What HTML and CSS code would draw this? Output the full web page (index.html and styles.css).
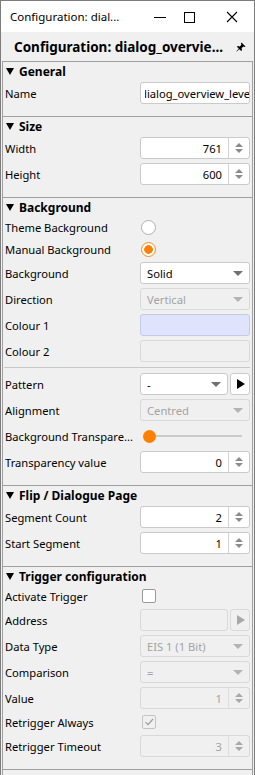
FILE: index.html
```html
<!DOCTYPE html>
<html>
<head>
<meta charset="utf-8">
<link rel="stylesheet" href="styles.css">
</head>
<body>
<div class="window">
  <div class="titlebar">
    <span class="title">Configuration: dial...</span>
    <div class="ctl ctl-min"><svg width="12" height="12" viewBox="0 0 12 12"><line x1="0" y1="6.5" x2="12" y2="6.5" stroke="#000" stroke-width="1"/></svg></div>
    <div class="ctl ctl-max"><svg width="12" height="12" viewBox="0 0 12 12"><rect x="1.5" y="1.5" width="10" height="10" fill="none" stroke="#000" stroke-width="1"/></svg></div>
    <div class="ctl ctl-close"><svg width="12" height="12" viewBox="0 0 12 12"><path d="M1 1L11 11M11 1L1 11" stroke="#000" stroke-width="1.1"/></svg></div>
  </div>
  <div class="header">
    <span class="htext">Configuration: dialog_overvie...</span>
    <svg class="pin" width="10" height="10" viewBox="0 0 10 10"><path d="M5.5 0.5L9.5 4.5L8.6 5.1L7.3 4.6L5.6 6.3L6 8.3L5.2 9.1L3.3 7.2L0.8 9.6L0.4 9.2L2.8 6.7L0.9 4.8L1.7 4L3.7 4.4L5.4 2.7L4.9 1.4Z" fill="#000"/></svg>
  </div>
  <div class="panel">
    <section class="sec">
      <div class="sec-title"><span class="tri"></span>General</div>
      <div class="row"><span class="lbl">Name</span><div class="field"><span class="val name-val">dialog_overview_level</span></div></div>
    </section>
    <section class="sec">
      <div class="sec-title"><span class="tri"></span>Size</div>
      <div class="row"><span class="lbl">Width</span><div class="field spin"><span class="val num">761</span><span class="spinbtn"><span class="up"></span><span class="dn"></span></span></div></div>
      <div class="row"><span class="lbl">Height</span><div class="field spin"><span class="val num">600</span><span class="spinbtn"><span class="up"></span><span class="dn"></span></span></div></div>
    </section>
    <section class="sec">
      <div class="sec-title"><span class="tri"></span>Background</div>
      <div class="row small"><span class="lbl">Theme Background</span><span class="radio"></span></div>
      <div class="row small"><span class="lbl">Manual Background</span><span class="radio on"></span></div>
      <div class="row"><span class="lbl">Background</span><div class="field combo"><span class="val">Solid</span><span class="arrow"></span></div></div>
      <div class="row"><span class="lbl">Direction</span><div class="field combo dis"><span class="val">Vertical</span><span class="arrow"></span></div></div>
      <div class="row"><span class="lbl">Colour 1</span><div class="field colour"></div></div>
      <div class="row"><span class="lbl">Colour 2</span><div class="field dis"></div></div>
      <div class="sep"></div>
      <div class="row"><span class="lbl">Pattern</span><div class="field combo short"><span class="val">-</span><span class="arrow"></span></div><div class="btn"><span class="play"></span></div></div>
      <div class="row"><span class="lbl">Alignment</span><div class="field combo dis"><span class="val">Centred</span><span class="arrow"></span></div></div>
      <div class="row"><span class="lbl">Background Transpare...</span><div class="slider"><span class="knob"></span><span class="track"></span></div></div>
      <div class="row"><span class="lbl">Transparency value</span><div class="field spin"><span class="val num">0</span><span class="spinbtn"><span class="up"></span><span class="dn"></span></span></div></div>
    </section>
    <section class="sec">
      <div class="sec-title"><span class="tri"></span>Flip / Dialogue Page</div>
      <div class="row"><span class="lbl">Segment Count</span><div class="field spin"><span class="val num">2</span><span class="spinbtn"><span class="up"></span><span class="dn"></span></span></div></div>
      <div class="row"><span class="lbl">Start Segment</span><div class="field spin"><span class="val num">1</span><span class="spinbtn"><span class="up"></span><span class="dn"></span></span></div></div>
    </section>
    <section class="sec">
      <div class="sec-title"><span class="tri"></span>Trigger configuration</div>
      <div class="row small"><span class="lbl">Activate Trigger</span><span class="check"></span></div>
      <div class="row"><span class="lbl">Address</span><div class="field short dis"></div><div class="btn dis"><span class="play"></span></div></div>
      <div class="row"><span class="lbl">Data Type</span><div class="field combo dis"><span class="val">EIS 1 (1 Bit)</span><span class="arrow"></span></div></div>
      <div class="row"><span class="lbl">Comparison</span><div class="field combo dis"><span class="val">=</span><span class="arrow"></span></div></div>
      <div class="row"><span class="lbl">Value</span><div class="field spin dis"><span class="val num">1</span><span class="spinbtn"><span class="up"></span><span class="dn"></span></span></div></div>
      <div class="row small"><span class="lbl">Retrigger Always</span><span class="check dis"><svg width="12" height="12" viewBox="0 0 12 12"><path d="M2.5 6.2L5 8.7L10 3" fill="none" stroke="#9a9a9a" stroke-width="1.2"/></svg></span></div>
      <div class="row"><span class="lbl">Retrigger Timeout</span><div class="field spin dis"><span class="val num">3</span><span class="spinbtn"><span class="up"></span><span class="dn"></span></span></div></div>
    </section>
    <div class="tail"></div>
  </div>
</div>
</body>
</html>
```

FILE: styles.css
```css
* { box-sizing: border-box; margin: 0; padding: 0; }
body {
  margin: 0;
  width: 255px;
  height: 775px;
  overflow: hidden;
  background: #f0f0f0;
  font-family: "Noto Sans", "Open Sans", sans-serif;
  font-size: 11.2px;
  color: #000;
}
.window {
  width: 255px;
  height: 775px;
  border: 1px solid #7d7d7d;
  border-bottom: none;
  display: flex;
  flex-direction: column;
}
.titlebar {
  height: 31px;
  flex: none;
  background: #fff;
  display: flex;
  align-items: center;
  padding-left: 9px;
}
.title { flex: 1; font-size: 11.5px; white-space: nowrap; }
.ctl { height: 31px; display: flex; align-items: center; justify-content: center; }
.ctl-min { width: 30px; }
.ctl-max { width: 28px; }
.ctl-close { width: 44px; margin-left: 7px; }
.header {
  height: 29px;
  flex: none;
  display: flex;
  align-items: center;
  padding: 0 8px 0 13px;
}
.htext { flex: 1; font-weight: bold; font-size: 13.5px; white-space: nowrap; }
.pin { flex: none; }
.panel {
  flex: 1;
  margin: 0 1px;
  border-left: 1px solid #a0a0a0;
  border-right: 1px solid #a0a0a0;
  display: flex;
  flex-direction: column;
}
.sec { border-top: 1px solid #a0a0a0; padding-bottom: 10px; }
.sec-title {
  height: 18px;
  display: flex;
  align-items: center;
  font-weight: bold;
  font-size: 12px;
  padding-left: 3px;
  gap: 5px;
}
.tri {
  width: 0; height: 0;
  border-left: 4px solid transparent;
  border-right: 4px solid transparent;
  border-top: 7px solid #000;
}
.tail { border-top: 1px solid #a0a0a0; flex: 1; }
.row { display: flex; align-items: center; height: 26px; padding-left: 2px; }
.row.small { height: 22px; }
.lbl { width: 135px; flex: none; white-space: nowrap; overflow: hidden; }
.field {
  width: 110px;
  height: 22px;
  flex: none;
  border: 1px solid #cacaca;
  border-radius: 3px;
  background: #fff;
  display: flex;
  align-items: center;
  overflow: hidden;
}
.field.short { width: 88px; }
.val { flex: 1; padding-left: 6px; white-space: nowrap; overflow: hidden; }
.name-val { padding-left: 0; margin-left: 4px; text-indent: -5px; }
.num { text-align: right; padding-right: 6px; }
.spinbtn {
  width: 21px;
  height: 100%;
  border-left: 1px solid #d4d4d4;
  display: flex;
  flex-direction: column;
  align-items: center;
  justify-content: center;
  gap: 2px;
}
.up, .dn { width: 0; height: 0; border-left: 4px solid transparent; border-right: 4px solid transparent; }
.up { border-bottom: 4px solid #8c8c8c; }
.dn { border-top: 4px solid #8c8c8c; }
.arrow {
  width: 0; height: 0;
  margin-right: 6px;
  border-left: 5px solid transparent;
  border-right: 5px solid transparent;
  border-top: 5px solid #707070;
}
.field.dis { background: #f0f0f0; border-color: #d9d9d9; color: #a3a3a3; }
.field.dis .arrow { border-top-color: #b4b4b4; }
.field.dis .up { border-bottom-color: #a8a8a8; }
.field.dis .dn { border-top-color: #a8a8a8; }
.field.dis .spinbtn { border-left-color: #dedede; }
.field.colour { background: #dfe3fc; border-color: #c5cae6; }
.btn {
  width: 20px; height: 22px; margin-left: 2px;
  border: 1px solid #cacaca; border-radius: 3px; background: #fff;
  display: flex; align-items: center; justify-content: center;
}
.play { width: 0; height: 0; border-top: 5px solid transparent; border-bottom: 5px solid transparent; border-left: 8px solid #000; margin-left: 2px; }
.btn.dis { background: #f0f0f0; border-color: #d9d9d9; }
.btn.dis .play { border-left-color: #a8a8a8; }
.sep { height: 1px; background: #c8c8c8; margin: 3px 2px 3px 1px; }
.radio {
  width: 15px; height: 15px; margin-left: 1px;
  border-radius: 50%;
  border: 1px solid #b0b0b0;
  background: #fff;
}
.radio.on {
  border: 1.5px solid #ff8a10;
  background: radial-gradient(circle, #ff8000 0 4px, #fff 4.6px);
}
.check {
  width: 14px; height: 14px; margin-left: 2px;
  border: 1px solid #9a9a9a; border-radius: 2px; background: #fff;
  display: flex; align-items: center; justify-content: center;
}
.check.dis { background: #f0f0f0; border-color: #c4c4c4; }
.slider { width: 110px; display: flex; align-items: center; }
.knob { width: 13px; height: 13px; border-radius: 50%; background: #ff8000; margin-left: 3px; flex: none; }
.track { height: 2px; width: 86px; background: #cbcbcb; }
```
